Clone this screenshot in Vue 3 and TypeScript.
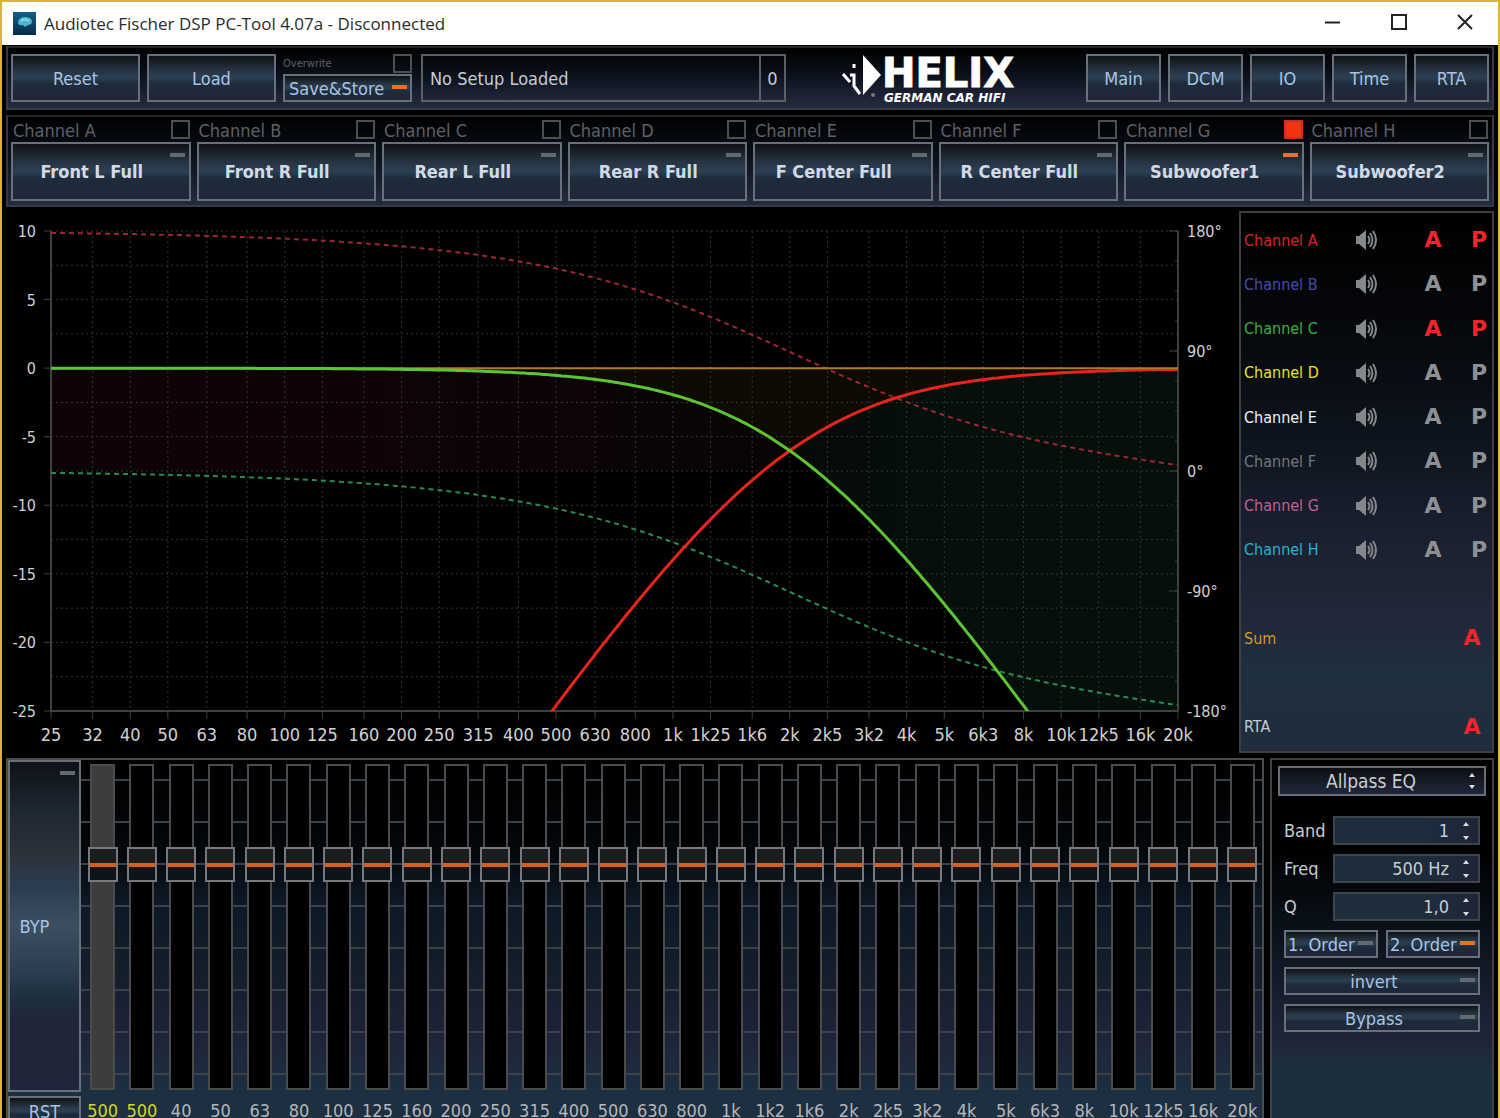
<script setup lang="ts">
import { ref } from 'vue'

interface Channel {
  id: string
  output: string
  color: string
  active: boolean
  shown: boolean
}

const channels = ref<Channel[]>([
  { id: 'A', output: 'Front L Full', color: '#d8232a', active: false, shown: true },
  { id: 'B', output: 'Front R Full', color: '#444cb4', active: false, shown: false },
  { id: 'C', output: 'Rear L Full', color: '#3fae3f', active: false, shown: true },
  { id: 'D', output: 'Rear R Full', color: '#e6e31e', active: false, shown: false },
  { id: 'E', output: 'F Center Full', color: '#f2f2f2', active: false, shown: false },
  { id: 'F', output: 'R Center Full', color: '#73777b', active: false, shown: false },
  { id: 'G', output: 'Subwoofer1', color: '#c65f95', active: true, shown: false },
  { id: 'H', output: 'Subwoofer2', color: '#27b3cb', active: false, shown: false },
])

const views = ['Main', 'DCM', 'IO', 'Time', 'RTA']
const setupName = ref('No Setup Loaded')
const overwrite = ref(false)

/* Frequency response chart */
const plot = { left: 45, top: 24, right: 1172, bottom: 504 }
const freqTicks: [number, string][] = [
  [25, '25'], [32, '32'], [40, '40'], [50, '50'], [63, '63'], [80, '80'], [100, '100'],
  [125, '125'], [160, '160'], [200, '200'], [250, '250'], [315, '315'], [400, '400'],
  [500, '500'], [630, '630'], [800, '800'], [1000, '1k'], [1250, '1k25'], [1600, '1k6'],
  [2000, '2k'], [2500, '2k5'], [3200, '3k2'], [4000, '4k'], [5000, '5k'], [6300, '6k3'],
  [8000, '8k'], [10000, '10k'], [12500, '12k5'], [16000, '16k'], [20000, '20k'],
]
const levelTicks = [10, 5, 0, -5, -10, -15, -20, -25]
const levelGrid = Array.from({ length: 14 }, (_, i) => 10 - i * 2.5)
const phaseTicks = [180, 90, 0, -90, -180]
const phaseMinor = Array.from({ length: 17 }, (_, i) => 180 - i * 22.5)

const fx = (f: number) =>
  plot.left + ((plot.right - plot.left) * Math.log10(f / 25)) / Math.log10(800)
const ly = (db: number) => plot.top + ((10 - db) * (plot.bottom - plot.top)) / 35
const py = (deg: number) => plot.top + ((180 - deg) * (plot.bottom - plot.top)) / 360

const crossover = 2000
const freqs = Array.from({ length: 301 }, (_, i) => 25 * Math.pow(800, i / 300))
const lowPass = (f: number) => -20 * Math.log10(1 + (f / crossover) ** 2)
const highPass = (f: number) => -20 * Math.log10(1 + (crossover / f) ** 2)
/* second-order phase plus the processing delay, 7 degrees at 20 kHz */
const lag = (f: number) => (-2 * Math.atan(f / crossover) * 180) / Math.PI - (7 * f) / 20000

const trace = (list: number[], y: (f: number) => number) =>
  list.map((f) => `${fx(f).toFixed(1)},${y(f).toFixed(1)}`).join(' ')

const lowLine = trace(freqs, (f) => ly(lowPass(f)))
const highLine = trace(freqs, (f) => ly(highPass(f)))
const lowPhase = trace(freqs, (f) => py(lag(f)))
const highPhase = trace(freqs, (f) => py(180 + lag(f)))

const below = freqs.filter((f) => f <= crossover)
const above = freqs.filter((f) => f >= crossover)
const zeroY = py(0)
const passArea =
  trace(below, (f) => Math.min(ly(lowPass(f)), zeroY)) +
  ` ${trace([...below].reverse(), (f) => Math.min(ly(highPass(f)), zeroY))} ${plot.left},${zeroY}`
const sumArea =
  `${plot.left},${ly(0)} ${trace(below, (f) => ly(lowPass(f)))} ` +
  `${trace(above, (f) => ly(highPass(f)))} ${plot.right},${ly(0)}`
const stopArea =
  `${trace(above, (f) => ly(highPass(f)))} ${plot.right},${plot.bottom} ` +
  trace([...above].reverse(), (f) => Math.min(ly(lowPass(f)), plot.bottom))

/* Equalizer */
const bandNames = [
  '500', '500', '40', '50', '63', '80', '100', '125', '160', '200', '250', '315', '400', '500',
  '630', '800', '1k', '1k2', '1k6', '2k', '2k5', '3k2', '4k', '5k', '6k3', '8k', '10k', '12k5',
  '16k', '20k',
]
const bands = ref(bandNames.map((name, i) => ({ name, gain: 0, allpass: i < 2, selected: i === 0 })))

const fields = ref([
  { id: 'band', label: 'Band', value: '1' },
  { id: 'freq', label: 'Freq', value: '500 Hz' },
  { id: 'q', label: 'Q', value: '1,0' },
])
</script>

<template>
  <div class="window">
    <header class="titlebar">
      <svg class="app-icon" viewBox="0 0 23 23" aria-hidden="true">
        <defs>
          <linearGradient id="iconBg" x1="0" y1="0" x2="0" y2="1">
            <stop offset="0" stop-color="#11618a" />
            <stop offset="1" stop-color="#06294a" />
          </linearGradient>
        </defs>
        <rect width="23" height="23" fill="url(#iconBg)" />
        <path d="M5 10 Q6 5 12 5 Q18 5 19 9 Q19 13 15 13 L12 15 L10 13 Q5 14 5 10Z" fill="#4fb3cc" />
        <path d="M8 9 Q12 6 16 9" stroke="#8fdbe8" stroke-width="2" fill="none" />
      </svg>
      <h1>Audiotec Fischer DSP PC-Tool 4.07a - Disconnected</h1>
      <div class="caption">
        <button type="button" aria-label="Minimize">
          <svg viewBox="0 0 16 16"><path d="M0 8.5H15" /></svg>
        </button>
        <button type="button" aria-label="Maximize">
          <svg viewBox="0 0 16 16"><path d="M1 1H15V15H1Z" /></svg>
        </button>
        <button type="button" aria-label="Close">
          <svg viewBox="0 0 16 16"><path d="M1 1L15 15M15 1L1 15" /></svg>
        </button>
      </div>
    </header>

    <main class="body">
      <section class="panel toolbar">
        <button type="button" class="btn wide">Reset</button>
        <button type="button" class="btn wide">Load</button>
        <div class="store">
          <label class="overwrite">Overwrite<input v-model="overwrite" type="checkbox" class="box" /></label>
          <button type="button" class="btn save">Save&amp;Store<i class="led on"></i></button>
        </div>
        <div class="setup">
          <input v-model="setupName" type="text" aria-label="Setup name" readonly />
          <output>0</output>
        </div>
        <div class="brand">
          <svg viewBox="0 0 190 56" role="img" aria-label="Helix German Car Hifi">
            <path d="M22 1L40 21L22 41Z" fill="#fff" />
            <path d="M2 20L9 28M9 21H13V32L19 40M13 10V14" fill="none" stroke="#fff" stroke-width="3" />
            <circle cx="32" cy="41" r="2" fill="#777" />
            <text x="41" y="33" class="logo-name">HELIX</text>
            <text x="43" y="48" class="logo-tag">GERMAN CAR HIFI</text>
          </svg>
        </div>
        <nav class="views">
          <button v-for="view in views" :key="view" type="button" class="btn">{{ view }}</button>
        </nav>
      </section>

      <section class="panel channels">
        <div v-for="ch in channels" :key="ch.id" class="channel">
          <label>Channel {{ ch.id }}<input v-model="ch.active" type="checkbox" class="box" /></label>
          <button type="button" class="btn out">{{ ch.output }}<i class="led" :class="{ on: ch.active }"></i></button>
        </div>
      </section>

      <section class="analysis">
        <svg class="chart" viewBox="0 0 1233 550" role="img" aria-label="Frequency response">
          <defs>
            <clipPath id="plotClip">
              <rect :x="plot.left" :y="plot.top - 2" :width="plot.right - plot.left" :height="plot.bottom - plot.top + 2" />
            </clipPath>
            <linearGradient id="stopFill" gradientUnits="userSpaceOnUse" x1="780" y1="0" x2="950" y2="0">
              <stop offset="0" stop-color="#070a07" />
              <stop offset="1" stop-color="#05100b" />
            </linearGradient>
            <linearGradient id="passFill" gradientUnits="userSpaceOnUse" x1="380" y1="0" x2="720" y2="0">
              <stop offset="0" stop-color="#0f0306" />
              <stop offset="1" stop-color="#0a0505" />
            </linearGradient>
          </defs>
          <g clip-path="url(#plotClip)">
            <polygon :points="passArea" fill="url(#passFill)" />
            <polygon :points="stopArea" fill="url(#stopFill)" />
            <polygon :points="sumArea" fill="#0d0b02" />
          </g>
          <g class="grid">
            <line v-for="[f] in freqTicks.slice(1, -1)" :key="f" :x1="fx(f)" :x2="fx(f)" :y1="plot.top" :y2="plot.bottom" />
            <line v-for="db in levelGrid" :key="db" :x1="plot.left" :x2="plot.right" :y1="ly(db)" :y2="ly(db)" />
          </g>
          <g class="axis">
            <path :d="`M${plot.left} ${plot.top}V${plot.bottom}H${plot.right}V${plot.top}`" />
            <line v-for="[f] in freqTicks" :key="f" :x1="fx(f)" :x2="fx(f)" :y1="plot.bottom" :y2="plot.bottom + 8" />
            <line v-for="db in levelTicks" :key="db" :x1="plot.left - 7" :x2="plot.left" :y1="ly(db)" :y2="ly(db)" />
            <line v-for="deg in phaseTicks" :key="deg" :x1="plot.right - 9" :x2="plot.right" :y1="py(deg)" :y2="py(deg)" />
            <line v-for="deg in phaseMinor" :key="deg" :x1="plot.right - 3" :x2="plot.right" :y1="py(deg)" :y2="py(deg)" />
          </g>
          <g clip-path="url(#plotClip)" fill="none">
            <polyline :points="lowPhase" class="phase" stroke="#2a8a52" />
            <polyline :points="highPhase" class="phase" stroke="#9c2636" />
            <polyline :points="highLine" stroke="#e8251d" stroke-width="3" />
            <line :x1="plot.left" :x2="plot.right" :y1="ly(0)" :y2="ly(0)" stroke="#a8802a" stroke-width="2" />
            <polyline :points="lowLine" stroke="#5cc435" stroke-width="3" />
          </g>
          <g class="ticks">
            <text v-for="db in levelTicks" :key="db" x="30" :y="ly(db) + 6" text-anchor="end">{{ db }}</text>
            <text v-for="deg in phaseTicks" :key="deg" x="1181" :y="py(deg) + 6">{{ deg }}°</text>
          </g>
          <g class="ticks freq">
            <text v-for="[f, name] in freqTicks" :key="f" :x="fx(f)" y="534" text-anchor="middle">{{ name }}</text>
          </g>
        </svg>

        <ul class="legend">
          <li v-for="ch in channels" :key="ch.id">
            <span class="name" :style="{ color: ch.color }">Channel {{ ch.id }}</span>
            <button type="button" class="mute" :aria-label="`Mute channel ${ch.id}`">
              <svg viewBox="0 0 22 22">
                <path d="M1 7H4L11 1V21L4 15H1Z" fill="#85888a" />
                <path d="M13 7Q16 11 13 15M15 4Q20 11 15 18M18 2Q24 11 18 20" fill="none" stroke="#85888a" stroke-width="2" />
              </svg>
            </button>
            <button type="button" class="flag" :class="{ on: ch.shown }">A</button>
            <button type="button" class="flag" :class="{ on: ch.shown }">P</button>
          </li>
          <li aria-hidden="true"></li>
          <li class="total"><span class="name sum">Sum</span><button type="button" class="flag on">A</button></li>
          <li aria-hidden="true"></li>
          <li class="total"><span class="name">RTA</span><button type="button" class="flag on">A</button></li>
        </ul>
      </section>

      <section class="lower">
        <div class="eq">
          <div class="eq-side">
            <button type="button" class="btn byp">BYP<i class="led"></i></button>
            <button type="button" class="btn rst">RST</button>
          </div>
          <div class="bands">
            <label v-for="(band, i) in bands" :key="i" class="band" :class="{ selected: band.selected, allpass: band.allpass }">
              <input v-model.number="band.gain" type="range" min="-15" max="6" step="0.25" />
              <span>{{ band.name }}</span>
            </label>
          </div>
        </div>

        <form class="filter" @submit.prevent>
          <div class="mode">
            <select aria-label="Filter type"><option>Allpass EQ</option></select>
            <svg class="spin" viewBox="0 0 8 18" aria-hidden="true"><path d="M4 1L7 5H1ZM4 17L7 13H1Z" /></svg>
          </div>
          <div class="settings">
            <div v-for="field in fields" :key="field.id" class="field">
              <label :for="field.id">{{ field.label }}</label>
              <div class="entry">
                <input :id="field.id" v-model="field.value" type="text" />
                <svg class="spin" viewBox="0 0 8 18" aria-hidden="true"><path d="M4 0L7 4H1ZM4 18L7 14H1Z" /></svg>
              </div>
            </div>
            <div class="orders">
              <button type="button" class="btn small">1. Order<i class="led"></i></button>
              <button type="button" class="btn small">2. Order<i class="led on"></i></button>
            </div>
            <button type="button" class="btn small center">invert<i class="led"></i></button>
            <button type="button" class="btn small center">Bypass<i class="led"></i></button>
          </div>
        </form>
      </section>
    </main>
  </div>
</template>

<style>
body {
  margin: 0;
  background: #000;
}
</style>

<style scoped>
* {
  box-sizing: border-box;
}
.window {
  display: flex;
  flex-direction: column;
  height: 100vh;
  overflow: hidden;
  border: 2px solid #d8b53a;
  border-bottom: 0;
  background: #000;
  color: #c9cccf;
  font-family: "DejaVu Sans Condensed", "DejaVu Sans", sans-serif;
  font-size: 18px;
}
button,
input,
select {
  margin: 0;
  font: inherit;
  color: inherit;
}

.titlebar {
  display: flex;
  flex: none;
  align-items: center;
  height: 43px;
  padding-left: 11px;
  background: #fff;
  color: #2b2b2b;
  font-family: "Open Sans", "Noto Sans", sans-serif;
}
.app-icon {
  width: 23px;
  height: 23px;
}
h1 {
  margin: 0 0 0 8px;
  font-size: 17px;
  font-weight: 400;
}
.caption {
  display: flex;
  margin-left: auto;
}
.caption button {
  display: grid;
  place-items: center;
  width: 66px;
  height: 40px;
  padding: 0 0 4px;
  border: 0;
  background: none;
}
.caption svg {
  width: 16px;
  height: 16px;
  fill: none;
  stroke: #222;
  stroke-width: 2;
}

.body {
  display: flex;
  flex: 1;
  flex-direction: column;
  min-height: 0;
  padding: 1px 4px 0;
}
.panel {
  flex: none;
  border: 2px solid #343b46;
  border-top-color: #26282b;
  background: linear-gradient(#000, #0b111b 45%, #1f2538 85%, #222c3e);
}
.btn {
  position: relative;
  padding: 0;
  border: 2px solid #68717a;
  background: linear-gradient(#0f1216, #263341 32%, #2c4053 50%, #1d2c3a 62%, #1f2639);
  color: #a9c4e4;
}
.led {
  position: absolute;
  top: 9px;
  right: 4px;
  width: 15px;
  height: 4px;
  background: #626a71;
}
.led.on {
  background: #e8702c;
}
.box {
  width: 19px;
  height: 19px;
  appearance: none;
  border: 2px solid #4d5053;
  background: transparent;
}
.box:checked {
  border-color: #c8321c;
  background: #f03414;
}

.toolbar {
  display: flex;
  height: 64px;
  padding: 6px 3px;
  gap: 7px;
}
.wide {
  width: 129px;
}
.store {
  display: flex;
  flex-direction: column;
  width: 129px;
}
.overwrite {
  display: flex;
  justify-content: space-between;
  height: 20px;
  color: #5f6265;
  font-size: 11px;
  line-height: 20px;
}
.save {
  height: 28px;
  padding-left: 4px;
  text-align: left;
}
.save .led {
  right: 3px;
}
.setup {
  display: flex;
  width: 365px;
  margin-left: 2px;
  border: 2px solid #5b6067;
}
.setup input {
  flex: 1;
  min-width: 0;
  padding: 0 7px;
  border: 0;
  background: none;
  outline: none;
}
.setup output {
  width: 25px;
  border-left: 2px solid #5b6067;
  line-height: 46px;
  text-align: center;
}
.brand {
  display: flex;
  flex: 1;
  justify-content: center;
}
.brand svg {
  width: 190px;
  height: 56px;
}
.logo-name,
.logo-tag {
  fill: #fff;
  font-family: "DejaVu Sans", sans-serif;
  font-weight: 700;
}
.logo-name {
  font-size: 40px;
  stroke: #fff;
  stroke-width: 1;
}
.logo-tag {
  font-size: 12px;
  font-style: italic;
}
.views {
  display: flex;
  gap: 7px;
}
.views .btn {
  width: 75px;
}

.channels {
  display: grid;
  grid-template-columns: repeat(8, 1fr);
  gap: 6px;
  margin-top: 5px;
  padding: 3px 3px 4px;
}
.channel label {
  display: flex;
  justify-content: space-between;
  height: 22px;
  padding: 0 1px 0 2px;
  color: #5d6166;
  line-height: 22px;
}
.out {
  display: block;
  width: 100%;
  height: 59px;
  padding-right: 18px;
  color: #d3dae6;
  font-weight: 700;
}

.analysis {
  display: flex;
  flex: none;
  margin-bottom: 1px;
}
.chart {
  display: block;
  flex: 1;
  min-width: 0;
}
.grid line {
  stroke: #343536;
  stroke-width: 1;
  stroke-dasharray: 2 3;
}
.axis {
  fill: none;
  stroke: #3d4142;
  stroke-width: 2;
}
.axis line {
  stroke-width: 1;
}
.phase {
  stroke-width: 2;
  stroke-dasharray: 5 4;
}
.ticks {
  fill: #d2d2d2;
  font-size: 16px;
}
.freq {
  font-size: 18px;
}

.legend {
  display: grid;
  grid-template-rows: repeat(12, 1fr);
  width: 255px;
  margin: 4px 0;
  padding: 5px 0 2px 3px;
  border: 2px solid #3c3f43;
  background: linear-gradient(#000, #05070a 20%, #0f1620 45%, #1b2030 60%, #222739 75%, #1e2f3f 85%, #1f2d3c);
  font-size: 16px;
  list-style: none;
}
.legend li {
  display: grid;
  grid-template-columns: 107px 1fr 66px 26px;
  align-items: center;
}
.legend li.total {
  grid-template-columns: 1fr 40px;
}
.sum {
  color: #d6982a;
}
.mute,
.flag {
  padding: 0;
  border: 0;
  background: none;
}
.mute svg {
  display: block;
  width: 30px;
  height: 22px;
}
.flag {
  color: #8e9194;
  font-family: "DejaVu Sans", sans-serif;
  font-size: 22px;
  font-weight: 700;
  line-height: 30px;
}
.flag.on {
  color: #f5232a;
}

.lower {
  display: flex;
  flex: 1;
  min-height: 0;
  gap: 6px;
}
.eq {
  display: flex;
  flex: 1;
  min-width: 0;
  border: 2px solid #4a4d50;
  border-bottom: 0;
  background: linear-gradient(#000, #04070b 25%, #0d1926 40%, #151e2b 60%, #1f2439 78%, #1c2f40 92%, #1e2f40);
}
.eq-side {
  display: flex;
  flex: none;
  flex-direction: column;
  width: 73px;
  gap: 4px;
}
.byp {
  flex: none;
  height: 332px;
  padding-right: 20px;
  background: linear-gradient(#0f1216, #1d2732 15%, #2c3139 28%, #2a3e50 38%, #3c4f60 50%, #2c3f50 63%, #1e2f3f 72%, #20263a 78%, #20243a);
}
.rst {
  flex: none;
  height: 30px;
}
.bands {
  display: grid;
  flex: 1;
  grid-template-columns: repeat(30, 1fr);
  height: 332px;
  padding-left: 2px;
  background:
    repeating-linear-gradient(transparent 0 40px, #3b4148 40px 42px) 0 -21px / 100% 353px no-repeat;
}
.band {
  display: flex;
  flex-direction: column;
  align-items: center;
  height: 360px;
  padding-top: 4px;
  color: #b3b8bd;
}
.band input {
  --groove: #000;
  display: block;
  flex: none;
  width: 30px;
  height: 326px;
  appearance: none;
  writing-mode: vertical-lr;
  direction: rtl;
  background:
    linear-gradient(var(--groove), var(--groove)) center / 21px 322px no-repeat,
    linear-gradient(#494b4d, #494b4d) center / 25px 326px no-repeat;
}
.band.selected input {
  --groove: #3d3d3d;
}
.band input::-webkit-slider-thumb {
  width: 30px;
  height: 35px;
  appearance: none;
  border: 2px solid #77797c;
  background: linear-gradient(#1b1d1f 14px, #d35f24 14px 18px, #2a130c 18px 20px, #0d141c 20px);
}
.band span {
  margin-top: 10px;
  line-height: 22px;
}
.allpass span {
  color: #d5d81c;
}

.filter {
  width: 224px;
  padding: 6px;
  border: 2px solid #3d4043;
  border-bottom: 0;
  background: linear-gradient(#000 25%, #0c131d 50%, #1c2234 72%, #20253a 80%, #1c2f3f 86%, #1d2e3e);
}
.mode,
.entry {
  position: relative;
}
.mode select {
  display: block;
  width: 100%;
  height: 30px;
  padding: 0 24px 0 2px;
  appearance: none;
  border: 2px solid #6a6d74;
  border-radius: 0;
  background: linear-gradient(#0b0e13, #20273a);
  font-size: 19px;
  text-align-last: center;
}
.spin {
  position: absolute;
  top: 6px;
  right: 10px;
  width: 8px;
  height: 18px;
  fill: #d8dadd;
}
.settings {
  display: grid;
  padding: 20px 6px 0;
  gap: 9px;
}
.field {
  display: grid;
  grid-template-columns: 49px 1fr;
  align-items: center;
}
.entry input {
  display: block;
  width: 100%;
  height: 29px;
  padding: 0 29px 0 4px;
  border: 2px solid #3d444c;
  background: linear-gradient(90deg, #1d2d3c 60%, #1f2538);
  text-align: right;
}
.orders {
  display: grid;
  grid-template-columns: 1fr 1fr;
  gap: 8px;
}
.small {
  height: 28px;
  padding-left: 2px;
  text-align: left;
}
.small .led {
  right: 3px;
}
.center {
  padding-right: 18px;
  text-align: center;
}
</style>
